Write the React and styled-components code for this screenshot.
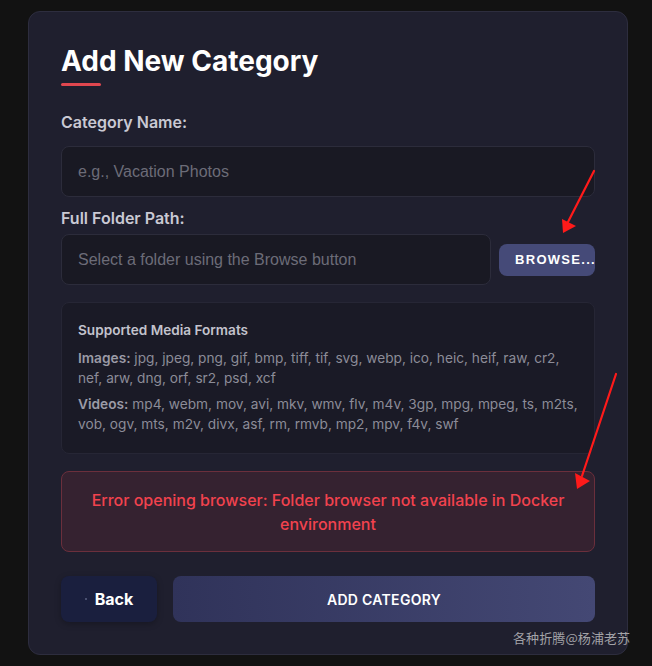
import React from "react";
import styled, { createGlobalStyle } from "styled-components";

const Global = createGlobalStyle`
  html, body { margin: 0; padding: 0; background: #121212; }
  body { font-family: Inter, "Noto Sans", sans-serif; }
  * { box-sizing: border-box; }
`;

const Page = styled.div`
  position: relative;
  width: 652px;
  height: 666px;
  padding: 11px 0 0 28px;
`;

const Card = styled.div`
  width: 600px;
  background: #1f1f2e;
  border: 1px solid #2d2d3e;
  border-radius: 12px;
  padding: 32px 32px 32px 32px;
  display: flex;
  flex-direction: column;
`;

const Title = styled.h2`
  margin: 0;
  font-size: 28px;
  line-height: 34px;
  font-weight: 700;
  color: #ffffff;
`;

const Accent = styled.div`
  width: 40px;
  height: 3px;
  margin-top: 5px;
  background: #e0474f;
  border-radius: 2px;
`;

const Label = styled.label`
  display: block;
  margin-top: ${(p) => p.$top}px;
  font-size: 16px;
  line-height: 20px;
  font-weight: 600;
  color: #c9c9d3;
`;

const Input = styled.input`
  display: block;
  width: 100%;
  height: 51px;
  margin-top: ${(p) => p.$top || 0}px;
  padding: 0 16px;
  background: #191923;
  border: 1px solid #2c2c3b;
  border-radius: 8px;
  color: #ddd;
  font-family: "Liberation Sans", Arial, sans-serif;
  font-size: 16px;
  outline: none;
  &::placeholder { color: #6c6c78; }
`;

const PathRow = styled.div`
  display: flex;
  align-items: center;
  gap: 8px;
  margin-top: 6px;
`;

const PathInput = styled(Input)`
  flex: 1;
  width: auto;
`;

const BrowseButton = styled.button`
  flex: 0 0 96px;
  height: 32px;
  padding: 0 0 0 16px;
  border: none;
  border-radius: 8px;
  background: #454a78;
  color: #ffffff;
  font-family: "Liberation Sans", Arial, sans-serif;
  font-weight: 700;
  font-size: 13px;
  letter-spacing: 1.3px;
  text-align: left;
  white-space: nowrap;
  overflow: hidden;
`;

const Formats = styled.div`
  margin-top: 17px;
  background: #1a1a26;
  border: 1px solid #262635;
  border-radius: 8px;
  padding: 16px 16px 19px 16px;
`;

const FormatsTitle = styled.div`
  font-size: 13.6px;
  line-height: 22px;
  font-weight: 600;
  color: #c3c3cd;
`;

const FormatLine = styled.p`
  margin: ${(p) => p.$top}px 0 0 0;
  font-size: 13.7px;
  line-height: 20px;
  color: #8c8c98;
  & b { color: #9b9ba6; font-weight: 600; }
`;

const ErrorBox = styled.div`
  margin-top: 17px;
  background: #352230;
  border: 1px solid #6b2f3c;
  border-radius: 8px;
  padding: 16px 16px 15px;
  text-align: center;
  color: #f2424e;
  font-size: 16px;
  line-height: 24px;
  font-weight: 500;
`;

const Actions = styled.div`
  display: flex;
  gap: 16px;
  margin-top: 24px;
`;

const BackButton = styled.button`
  flex: 0 0 96px;
  height: 46px;
  border: none;
  border-radius: 8px;
  background: #1a1f3e;
  color: #ffffff;
  font-family: Inter, sans-serif;
  font-size: 16px;
  font-weight: 700;
  display: flex;
  align-items: center;
  justify-content: center;
  gap: 8px;
  padding: 0;
  box-shadow: 0 2px 6px rgba(0, 0, 0, 0.25);
`;

const Dot = styled.span`
  width: 2px;
  height: 2px;
  background: #4a5070;
`;

const SubmitButton = styled.button`
  flex: 1;
  height: 46px;
  border: none;
  border-radius: 8px;
  background: linear-gradient(90deg, #30335a 0%, #444874 100%);
  color: #ffffff;
  font-family: Inter, sans-serif;
  font-size: 14px;
  font-weight: 600;
  letter-spacing: 0.3px;
`;

const Watermark = styled.div`
  position: absolute;
  left: 513px;
  top: 628px;
  font-family: "Noto Sans CJK SC", sans-serif;
  font-size: 13px;
  line-height: 20px;
  color: #a3a3a8;
  letter-spacing: 0.1px;
`;

const Overlay = styled.svg`
  position: absolute;
  left: 0;
  top: 0;
  pointer-events: none;
`;

export default function App() {
  return (
    <>
      <Global />
      <Page>
        <Card>
          <Title>Add New Category</Title>
          <Accent />
          <Label $top={26}>Category Name:</Label>
          <Input $top={14} placeholder="e.g., Vacation Photos" />
          <Label $top={11}>Full Folder Path:</Label>
          <PathRow>
            <PathInput placeholder="Select a folder using the Browse button" />
            <BrowseButton>BROWSE...</BrowseButton>
          </PathRow>
          <Formats>
            <FormatsTitle>Supported Media Formats</FormatsTitle>
            <FormatLine $top={7}>
              <b>Images:</b> jpg, jpeg, png, gif, bmp, tiff, tif, svg, webp, ico, heic, heif, raw, cr2, nef, arw, dng, orf, sr2, psd, xcf
            </FormatLine>
            <FormatLine $top={6}>
              <b>Videos:</b> mp4, webm, mov, avi, mkv, wmv, flv, m4v, 3gp, mpg, mpeg, ts, m2ts, vob, ogv, mts, m2v, divx, asf, rm, rmvb, mp2, mpv, f4v, swf
            </FormatLine>
          </Formats>
          <ErrorBox>
            Error opening browser: Folder browser not available in Docker environment
          </ErrorBox>
          <Actions>
            <BackButton>
              <Dot />
              Back
            </BackButton>
            <SubmitButton>ADD CATEGORY</SubmitButton>
          </Actions>
        </Card>
        <Watermark>各种折腾@杨浦老苏</Watermark>
        <Overlay width="652" height="666" viewBox="0 0 652 666">
          <line x1="594" y1="171" x2="568" y2="222" stroke="#ff1a1a" strokeWidth="2.2" strokeLinecap="round" />
          <polygon points="563,233 562,219 576,226" fill="#ff1a1a" />
          <line x1="616" y1="374" x2="582" y2="476" stroke="#ff1a1a" strokeWidth="2.2" strokeLinecap="round" />
          <polygon points="577,489 575,473 590,481" fill="#ff1a1a" />
        </Overlay>
      </Page>
    </>
  );
}
